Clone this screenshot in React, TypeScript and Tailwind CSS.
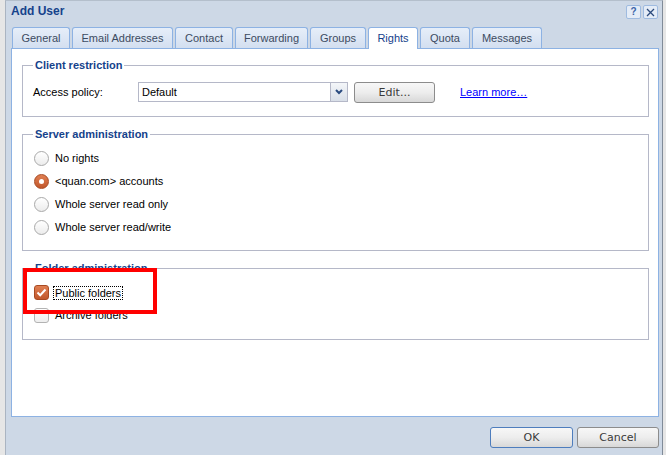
import React from "react";

const tabs = [
  { label: "General", w: "w-[58px]" },
  { label: "Email Addresses", w: "w-[101px]" },
  { label: "Contact", w: "w-[58px]" },
  { label: "Forwarding", w: "w-[73px]" },
  { label: "Groups", w: "w-[56px]" },
  { label: "Rights", w: "w-[50px]", active: true },
  { label: "Quota", w: "w-[50px]" },
  { label: "Messages", w: "w-[70px]" },
];

const serverRights = [
  { label: "No rights" },
  { label: "<quan.com> accounts", checked: true },
  { label: "Whole server read only" },
  { label: "Whole server read/write" },
];

function Radio({ checked }: { checked?: boolean }) {
  if (checked) {
    return (
      <span className="ml-[1px] flex h-[15px] w-[15px] items-center justify-center rounded-full border border-[#a84a22] bg-gradient-to-b from-[#e07f52] to-[#c1572b]">
        <span className="h-[5px] w-[5px] rounded-full bg-white" />
      </span>
    );
  }
  return (
    <span className="ml-[1px] h-[15px] w-[15px] rounded-full border border-[#a9a9a9] bg-gradient-to-b from-white to-[#ececec]" />
  );
}

function Checkbox({ checked }: { checked?: boolean }) {
  if (checked) {
    return (
      <span className="ml-[1px] flex h-[15px] w-[15px] items-center justify-center rounded-[3px] border border-[#a84a22] bg-gradient-to-b from-[#e07f52] to-[#c1572b]">
        <svg width="11" height="9" viewBox="0 0 11 9" aria-hidden="true">
          <path d="M1.5 4.5 L4.2 7.2 L9.5 1.5" fill="none" stroke="#fff" strokeWidth="2" />
        </svg>
      </span>
    );
  }
  return (
    <span className="ml-[1px] h-[15px] w-[15px] rounded-[3px] border border-[#b3b3b3] bg-gradient-to-b from-white to-[#eeeeee]" />
  );
}

function Fieldset({ title, className, children }: { title: string; className?: string; children: React.ReactNode }) {
  return (
    <fieldset className={`w-[627px] border border-[#b5b8c8] px-[10px] ${className ?? ""}`}>
      <legend className="px-[2px] text-[11px] font-bold leading-[14px] text-[#15428b]">{title}</legend>
      {children}
    </fieldset>
  );
}

function GreyButton({ label, w, focused }: { label: string; w: string; focused?: boolean }) {
  return (
    <button
      type="button"
      className={`${w} h-[21px] rounded-[3px] border bg-gradient-to-b from-[#f7f7f7] via-[#ededed] to-[#d8d8d8] text-[11px] leading-[19px] text-[#3a3a3a] font-['DejaVu_Sans',Verdana,sans-serif] ${
        focused ? "border-[#4e7dbd]" : "border-[#8c8c8c]"
      }`}
    >
      {label}
    </button>
  );
}

export default function App() {
  return (
    <div className="relative flex h-[455px] w-[666px] overflow-hidden bg-[#e6e6e6] font-['Liberation_Sans',Arial,sans-serif]">
      <div className="ml-[5px] flex h-full w-[658px] flex-col border-l border-r border-t border-l-[#aab4c1] border-r-[#808b99] border-t-[#b4bfcc] bg-[#cdd8e6]">
        {/* title bar */}
        <div className="flex h-[26px] items-start justify-between pl-[5px] pr-[4px] pt-[3px]">
          <span className="text-[12px] font-bold leading-[14px] text-[#15428b]">Add User</span>
          <div className="mt-[1px] flex gap-[2px]">
            <span className="flex h-[14px] w-[15px] items-center justify-center rounded-[2px] border border-[#9fbbe0] bg-[#e4ecf7] text-[10px] font-bold leading-none text-[#3a64a8]">
              ?
            </span>
            <span className="flex h-[14px] w-[15px] items-center justify-center rounded-[2px] border border-[#9fbbe0] bg-[#e4ecf7]">
              <svg width="9" height="9" viewBox="0 0 9 9" aria-hidden="true">
                <path d="M1 1 L8 8 M8 1 L1 8" stroke="#2b4a7c" strokeWidth="1.3" />
              </svg>
            </span>
          </div>
        </div>

        {/* tabs */}
        <div className="flex h-[21px] items-end gap-[2px] pl-[6px]">
          {tabs.map((t) => (
            <div
              key={t.label}
              className={`${t.w} relative flex h-[21px] items-center justify-center rounded-t-[3px] border border-b-0 border-[#8db2e3] text-[11px] ${
                t.active
                  ? "z-10 -mb-px h-[22px] bg-white text-[#15428b]"
                  : "bg-gradient-to-b from-[#e6eef9] to-[#d3dff0] text-[#3c4b61]"
              }`}
            >
              {t.label}
            </div>
          ))}
        </div>

        {/* panel */}
        <div className="ml-[5px] flex h-[369px] w-[648px] flex-col border border-[#8db2e3] bg-white pl-[10px] pr-[8px] pt-[9px]">
          <Fieldset title="Client restriction" className="pb-[14px] pt-[10px]">
            <div className="flex h-[20px] items-center text-[11px] text-black">
              <span className="w-[105px]">Access policy:</span>
              <div className="flex h-[20px] w-[210px] border border-[#b5b8c8] bg-white">
                <span className="flex-1 pl-[3px] leading-[18px]">Default</span>
                <span className="flex w-[17px] items-center justify-center border-l border-[#b5b8c8] bg-gradient-to-b from-[#f4f6f9] to-[#d9dfe8]">
                  <svg width="8" height="6" viewBox="0 0 8 6" aria-hidden="true">
                    <path d="M1 1 L4 4 L7 1" fill="none" stroke="#2a4b80" strokeWidth="2" />
                  </svg>
                </span>
              </div>
              <span className="ml-[6px]">
                <GreyButton label="Edit..." w="w-[81px]" />
              </span>
              <a href="#" className="ml-[25px] text-[#0000ff] underline">
                Learn more…
              </a>
            </div>
          </Fieldset>

          <Fieldset title="Server administration" className="mt-[10px] pb-[11px] pt-[6px]">
            {serverRights.map((r) => (
              <div key={r.label} className="flex h-[23px] items-center text-[11px] text-black">
                <Radio checked={r.checked} />
                <span className="ml-[6px]">{r.label}</span>
              </div>
            ))}
          </Fieldset>

          <Fieldset title="Folder administration" className="mt-[10px] pb-[12px] pt-[6px]">
            <div className="flex h-[23px] items-center text-[11px] text-black">
              <Checkbox checked />
              <span className="ml-[5px] px-[1px] leading-[12px] outline-1 outline-dotted outline-black">Public folders</span>
            </div>
            <div className="flex h-[23px] items-center text-[11px] text-black">
              <Checkbox />
              <span className="ml-[6px]">Archive folders</span>
            </div>
          </Fieldset>
        </div>

        {/* footer buttons */}
        <div className="flex justify-end gap-[4px] pr-[3px] pt-[10px]">
          <GreyButton label="OK" w="w-[83px]" focused />
          <GreyButton label="Cancel" w="w-[82px]" />
        </div>
      </div>

      {/* red highlight annotation */}
      <div className="absolute left-[23px] top-[268px] h-[46px] w-[134px] border-4 border-[#ff0000]" />
    </div>
  );
}
